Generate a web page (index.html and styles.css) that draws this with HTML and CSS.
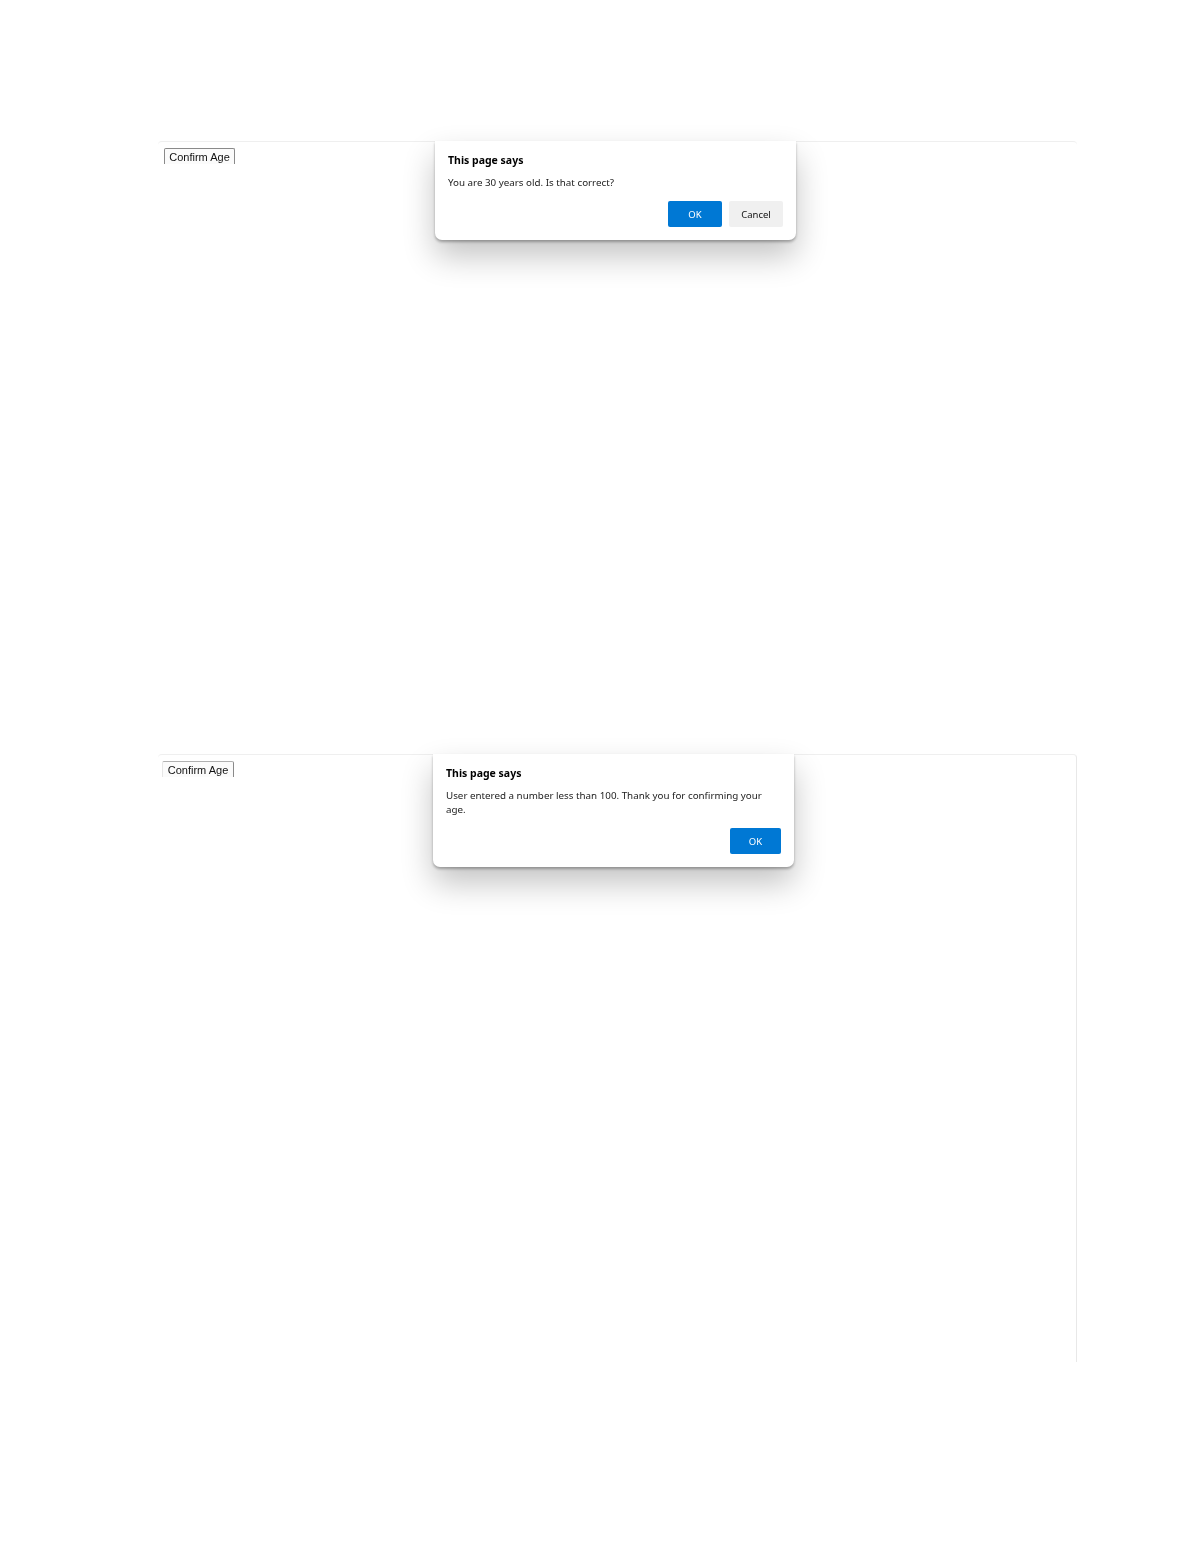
FILE: index.html

```html
<!DOCTYPE html>
<html lang="en">
<head>
  <meta charset="UTF-8" />
  <meta name="viewport" content="width=device-width, initial-scale=1.0"/>
  <title>Confirm Age</title>
  <link rel="stylesheet" href="styles.css">
</head>
<body>
  <div class="panel panel-first">
    <button class="age-btn" type="button">Confirm Age</button>
    <div class="dialog">
      <div class="dialog-title">This page says</div>
      <p class="dialog-text">You are 30 years old. Is that correct?</p>
      <div class="dialog-actions">
        <button class="btn btn-ok" type="button">OK</button>
        <button class="btn btn-cancel" type="button">Cancel</button>
      </div>
    </div>
  </div>

  <div class="panel panel-second">
    <button class="age-btn age-btn-open" type="button">Confirm Age</button>
    <div class="dialog">
      <div class="dialog-title">This page says</div>
      <p class="dialog-text">User entered a number less than 100. Thank you for confirming your age.</p>
      <div class="dialog-actions">
        <button class="btn btn-ok btn-narrow" type="button">OK</button>
      </div>
    </div>
  </div>
</body>
</html>
```

FILE: styles.css

```css
body {
  font-family: "Noto Sans", "Open Sans", sans-serif;
  background: #ffffff;
  margin: 0;
  padding-top: 141px;
  height: 1412px;
  overflow: hidden;
}
/* the source is a scaled-down scan, so everything is a little soft */
.panel {
  position: relative;
  margin-left: 158px;
  width: 919px;
  box-sizing: border-box;
  border-top: 1px solid #efefef;
  border-radius: 4px 4px 0 0;
  filter: blur(0.35px);
}
.panel-first {
  height: 613px;
  padding: 6px 0 0 6px;
}
.panel-second {
  height: 608px;
  padding: 6px 0 0 4px;
  border-right: 1px solid #e8e8e8;
}
.age-btn {
  display: block;
  width: 71px;
  height: 16px;
  padding: 1px 0 0;
  font-family: "Liberation Sans", sans-serif;
  font-size: 11px;
  line-height: 15px;
  color: #111;
  background: #fbfbfb;
  border: 1px solid #8a8a8a;
  border-bottom: none;
  border-radius: 2px 2px 0 0;
}
.age-btn-open {
  width: 72px;
  border-left-color: #e6e6e6;
  border-top-color: #b0b0b0;
}
.dialog {
  position: absolute;
  top: -1px;
  left: 277px;
  width: 361px;
  box-sizing: border-box;
  padding: 12px 13px 13px;
  background: #ffffff;
  border-radius: 0 0 7px 7px;
  box-shadow: 0 2px 3px rgba(0, 0, 0, 0.3), 0 16px 32px rgba(0, 0, 0, 0.24);
}
.panel-second .dialog {
  left: 275px;
}
.dialog-title {
  font-size: 10.5px;
  line-height: 14px;
  font-weight: bold;
  color: #000;
}
.dialog-text {
  margin: 9px 0 0;
  font-size: 9.8px;
  line-height: 14px;
  color: #222;
}
.dialog-actions {
  display: flex;
  justify-content: flex-end;
  gap: 7px;
  margin-top: 11px;
}
.btn {
  width: 54px;
  height: 26px;
  padding: 0;
  font-family: inherit;
  font-size: 9.5px;
  border: none;
  border-radius: 2px;
}
.btn-ok {
  background: #0078d4;
  color: #ffffff;
}
.btn-cancel {
  background: #f0f0f0;
  color: #111;
}
.btn-narrow {
  width: 51px;
}
```
